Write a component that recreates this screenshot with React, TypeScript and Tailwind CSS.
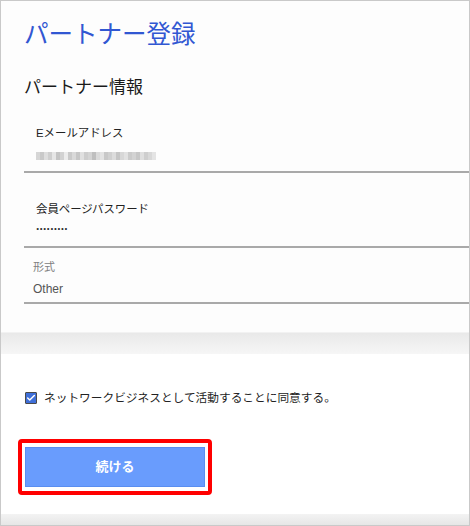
import { Check } from 'lucide-react'

// mosaic stand-in for the blurred e-mail value
const mosaic = [
  'bg-[#d6d6d6]', 'bg-[#c9c9c9]', 'bg-[#dedede]', 'bg-[#cfcfcf]', 'bg-[#e6e6e6]', 'bg-[#c4c4c4]',
  'bg-[#d2d2d2]', 'bg-[#ececec]', 'bg-[#cacaca]', 'bg-[#d9d9d9]', 'bg-[#c6c6c6]', 'bg-[#e0e0e0]',
  'bg-[#cdcdcd]', 'bg-[#d4d4d4]', 'bg-[#bfbfbf]', 'bg-[#dadada]', 'bg-[#e3e3e3]', 'bg-[#c8c8c8]',
  'bg-[#d0d0d0]', 'bg-[#dcdcdc]', 'bg-[#c5c5c5]', 'bg-[#d7d7d7]', 'bg-[#e1e1e1]', 'bg-[#cbcbcb]',
  'bg-[#d3d3d3]', 'bg-[#c7c7c7]', 'bg-[#dfdfdf]', 'bg-[#cecece]', 'bg-[#d8d8d8]', 'bg-[#e4e4e4]',
]

const Field = ({ children, className }: { children: React.ReactNode; className: string }) => (
  <div className={`ml-[23px] border-b-2 border-[#a9a9a9] ${className}`}>{children}</div>
)

export default function App() {
  return (
    <div
      className="w-[470px] h-[526px] border border-[#c9c9c9] bg-white flex flex-col overflow-hidden"
      style={{ fontFamily: '"Liberation Sans", "Noto Sans CJK JP", sans-serif' }}
    >
      {/* Partner info card */}
      <div className="pt-[16px] pb-[28px] bg-[#fdfdfd]">
        <h1 className="pl-[23px] text-[24.5px] leading-[36px] text-[#3157d2] font-normal">パートナー登録</h1>
        <h2 className="pl-[23px] mt-[23px] text-[17px] leading-[24px] text-[#1a1a1a] font-normal">パートナー情報</h2>

        <Field className="pt-[25px] pb-[7px] pl-[12px]">
          <div className="text-[11.4px] leading-[16px] text-[#222]">Eメールアドレス</div>
          <div className="mt-[7px] h-[16px] flex items-center">
            <div className="flex h-[8px] w-[120px] blur-[0.4px]">
              {mosaic.map((c, i) => (
                <div key={i} className={`flex-1 ${c}`} />
              ))}
            </div>
          </div>
        </Field>

        <Field className="pt-[28px] pb-[12px] pl-[12px]">
          <div className="text-[11.4px] leading-[16px] text-[#222]">会員ページパスワード</div>
          <div className="mt-[1px] text-[12px] leading-[16px] font-bold text-[#333] tracking-[0.2px]">.........</div>
        </Field>

        <Field className="pt-[12px] pb-[5px] pl-[9px]">
          <div className="text-[11px] leading-[14px] text-[#808080]">形式</div>
          <div className="mt-[7px] text-[12px] leading-[16px] text-[#555]">Other</div>
        </Field>
      </div>

      {/* card gap */}
      <div className="h-[22px] border-t border-[#f2f2f2] bg-gradient-to-b from-[#e9e9e9] to-[#f6f6f6]" />

      {/* Agreement + submit */}
      <div className="flex-1 flex flex-col bg-white">
        <label className="mt-[36px] pl-[24px] h-[16px] flex items-center gap-[7px]">
          <span className="w-[12px] h-[12px] border border-[#4a4a4a] bg-[#3f6fd8] flex items-center justify-center rounded-[1px]">
            <Check className="w-[10px] h-[10px] text-white" strokeWidth={3.5} />
          </span>
          <span className="text-[11.7px] leading-[16px] text-[#222]">ネットワークビジネスとして活動することに同意する。</span>
        </label>

        <div className="mt-[33px] ml-[17px] w-[194px] h-[56px] border-[4px] border-[#ff0000] rounded-[4px] px-[3px] py-[4px] bg-white">
          <button className="w-full h-full bg-[#699cfd] border border-[#5a8ef0] text-white text-[13px] font-bold">
            続ける
          </button>
        </div>

        <div className="mt-auto h-[11px] bg-gradient-to-b from-[#f3f3f3] to-[#e6e6e6]" />
      </div>
    </div>
  )
}
